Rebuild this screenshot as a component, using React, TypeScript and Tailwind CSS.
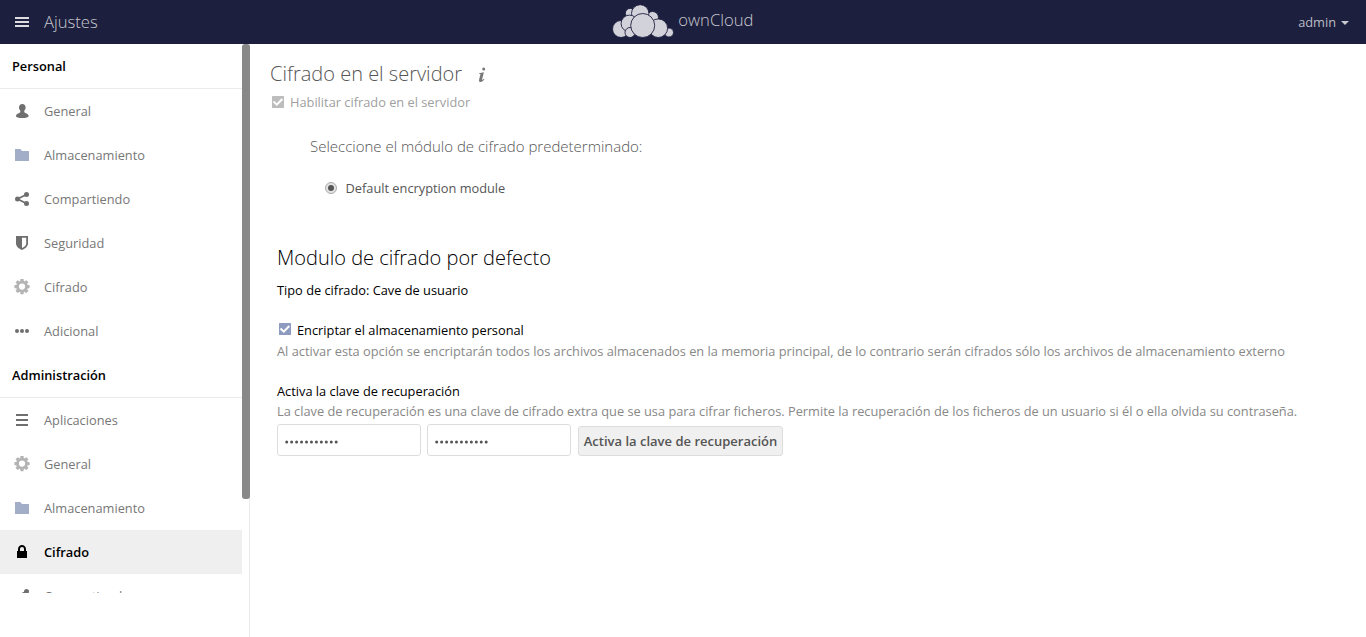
import React from "react";

type IconName = "user" | "folder" | "share" | "shield" | "gear" | "dots" | "list" | "lock";

function Gear() {
  return (
    <g fill="#b4b4b4" transform="translate(0 -0.4)">
      {[0, 45, 90, 135, 180, 225, 270, 315].map((a) => (
        <rect key={a} x="6.3" y="0.4" width="3.4" height="4" rx="0.6" transform={`rotate(${a} 8 8)`} />
      ))}
      <circle cx="8" cy="8" r="4.5" fill="none" stroke="#b4b4b4" strokeWidth="2.8" />
    </g>
  );
}

function Icon({ name }: { name: IconName }) {
  return (
    <svg width="16" height="16" viewBox="0 0 16 16" className="block shrink-0" fill="#6f6f6f">
      {name === "user" && (
        <path d="M8.300 1C6.300 1 5 2.300 5 4.200c0 1.700.6 2.700 1.300 3.500v1.500C5.900 10 2 10.500 2 12.900c0 1.400 2.800 2.100 6.300 2.100s6.300-.7 6.300-2.100C14.600 10.500 10.700 10 10.300 9.200V7.700c.7-.8 1.300-1.800 1.300-3.500C11.600 2.300 10.300 1 8.300 1z" />
      )}
      {name === "folder" && <path fill="#a2adc8" d="M1.300 2h5l1.700 2h6.400a.6.6 0 0 1 .6.600v8.800a.6.6 0 0 1-.6.600H1.600a.6.6 0 0 1-.6-.6V2.300z" />}
      {name === "share" && (
        <g>
          <path d="M12.500 3.500L3.500 8l9 4.500" fill="none" stroke="#6f6f6f" strokeWidth="1.800" />
          <circle cx="12.500" cy="3.500" r="2.500" />
          <circle cx="3.500" cy="8" r="2.500" />
          <circle cx="12.500" cy="12.500" r="2.500" />
        </g>
      )}
      {name === "shield" && (
        <path fillRule="evenodd" d="M2 1h12v7.500c0 3-3 5.200-6 6.500-3-1.300-6-3.500-6-6.500zM8 2.700v10.400c2-.9 4.200-2.500 4.200-4.600V2.700z" />
      )}
      {name === "gear" && <Gear />}
      {name === "dots" && (
        <g>
          <circle cx="3" cy="8" r="2" />
          <circle cx="8" cy="8" r="2" />
          <circle cx="13" cy="8" r="2" />
        </g>
      )}
      {name === "list" && <path d="M2 2h12v2H2zM2 7h12v2H2zM2 12h12v2H2z" />}
      {name === "lock" && (
        <path fill="#000" fillRule="evenodd" d="M8 1C5.800 1 4 2.800 4 5v2H3v7h10V7h-1V5c0-2.200-1.800-4-4-4zm0 2c1.200 0 2 .8 2 2v2H6V5c0-1.200.8-2 2-2z" />
      )}
    </svg>
  );
}

function Item({ icon, label, active }: { icon: IconName; label: string; active?: boolean }) {
  return (
    <li
      className={
        active
          ? "flex h-11 shrink-0 items-center gap-3.5 bg-[#efefef] px-3.5 font-semibold text-black"
          : "flex h-11 shrink-0 items-center gap-3.5 px-3.5 text-[#777777]"
      }
    >
      <Icon name={icon} />
      <span>{label}</span>
    </li>
  );
}

function Section({ title, children }: { title: string; children: React.ReactNode }) {
  return (
    <section>
      <h2 className="flex h-[45px] items-center border-b border-[#ebebeb] px-3 font-semibold text-black">{title}</h2>
      <ul>{children}</ul>
    </section>
  );
}

function Check({ color }: { color: "gray" | "blue" }) {
  return (
    <svg width="12" height="12" viewBox="0 0 12 12" className="block shrink-0">
      <rect width="12" height="12" rx="0.5" fill={color === "gray" ? "#bdbdbd" : "#8c9bbf"} />
      <path d="M1.500 5.500l3.300 3.200 5.500-5.700" fill="none" stroke="#fff" strokeWidth="2" />
    </svg>
  );
}

function Logo() {
  return (
    <svg width="62" height="34" viewBox="612 4 62 34" className="block" fill="#d2d2da" stroke="#1d1f3e" strokeWidth="0.9">
      <circle cx="630.2" cy="13.200" r="4.800" />
      <circle cx="652.500" cy="17.500" r="6" />
      <circle cx="640.200" cy="13.400" r="8.700" />
      <circle cx="621" cy="29" r="8.500" />
      <circle cx="629.500" cy="23.500" r="8.400" />
      <circle cx="630" cy="32.500" r="5" />
      <circle cx="669" cy="32.500" r="4.500" />
      <circle cx="658.300" cy="28.200" r="9.300" />
      <circle cx="642.700" cy="25.500" r="12" />
    </svg>
  );
}

function PasswordBox() {
  return (
    <div className="flex h-8 w-36 items-center rounded-[3px] border border-[#dddddd] bg-white px-[7px]">
      <svg width="54" height="4" viewBox="0 0 54 4" className="mt-[3px]" fill="#555555">
        {Array.from({ length: 11 }, (_, i) => (
          <circle key={i} cx={1.7 + i * 4.95} cy="2" r="1.500" />
        ))}
      </svg>
    </div>
  );
}

export default function App() {
  return (
    <div className="flex h-[637px] w-[1366px] flex-col overflow-hidden bg-white font-['Open_Sans',sans-serif] text-[12.8px] leading-5">
      <header className="grid h-11 shrink-0 grid-cols-3 items-center bg-[#1d1f3e]">
        <div className="flex items-center gap-3.5 pl-3.5">
          <svg width="16" height="16" viewBox="0 0 16 16" fill="#dcdce2" className="block">
            <path d="M1 3h14v2H1zM1 7h14v2H1zM1 11h14v2H1z" />
          </svg>
          <span className="text-[16.64px] font-light text-[#c8c8cf]">Ajustes</span>
        </div>
        <div className="flex items-center gap-[4px] pb-0.5 pl-[157px]">
          <Logo />
          <span className="pb-[3px] text-[16.64px] font-light text-[#c8c8cf]">ownCloud</span>
        </div>
        <div className="flex items-center justify-end gap-[5px] pr-[17px] text-[#bcbcc4]">
          <span>admin</span>
          <svg width="8" height="4" viewBox="0 0 8 4" fill="#c8c8cf" className="mt-px">
            <path d="M0 0h8L4 4z" />
          </svg>
        </div>
      </header>
      <div className="flex min-h-0 flex-1">
        <aside className="flex w-[250px] shrink-0 border-r border-[#ebebeb]">
          <nav className="h-[549px] w-[242px] shrink-0 overflow-hidden">
            <Section title="Personal">
              <Item icon="user" label="General" />
              <Item icon="folder" label="Almacenamiento" />
              <Item icon="share" label="Compartiendo" />
              <Item icon="shield" label="Seguridad" />
              <Item icon="gear" label="Cifrado" />
              <Item icon="dots" label="Adicional" />
            </Section>
            <Section title="Administración">
              <Item icon="list" label="Aplicaciones" />
              <Item icon="gear" label="General" />
              <Item icon="folder" label="Almacenamiento" />
              <Item icon="lock" label="Cifrado" active />
              <Item icon="share" label="Compartiendo" />
            </Section>
          </nav>
          <div className="h-[455px] w-2 shrink-0 rounded-[3px] bg-[#888888]" />
        </aside>
        <main className="flex min-w-0 flex-1 flex-col items-start whitespace-nowrap">
          <div className="mt-[15px] flex h-[30px] items-center gap-[16px] pl-5">
            <h1 className="text-[20px] font-light text-[#555555]">Cifrado en el servidor</h1>
            <svg width="8" height="16" viewBox="0 0 8 16" fill="#777777" className="mt-0.5">
              <circle cx="5.700" cy="1.900" r="1.500" />
              <path d="M1.200 6.200L5.900 5.200 4.100 12.300c-.2.900.5.800 1.900-.5l.4.500C5 14 3.900 15 2.600 15c-1.300 0-1.800-.9-1.500-2.300L2.500 7H1.100z" />
            </svg>
          </div>
          <label className="mt-[3px] flex h-5 items-center gap-1.5 pl-[22px] text-[#a0a0a0]">
            <Check color="gray" />
            <span>Habilitar cifrado en el servidor</span>
          </label>
          <p className="mt-6 pl-[60px] text-[15px] font-light text-[#555555]">Seleccione el módulo de cifrado predeterminado:</p>
          <label className="mt-[22px] flex h-5 items-center gap-[8.5px] pl-[75px] text-[#555555]">
            <svg width="12" height="12" viewBox="0 0 12 12" className="block">
              <circle cx="6" cy="6" r="5.500" fill="#e3e3e3" stroke="#aaaaaa" />
              <circle cx="6" cy="6" r="3" fill="#555555" />
            </svg>
            <span>Default encryption module</span>
          </label>
          <section className="mt-[45px] flex flex-col items-start pl-[27px] text-black">
            <h2 className="h-[30px] text-[20px] leading-[30px] font-light">Modulo de cifrado por defecto</h2>
            <p className="mt-[7px]">Tipo de cifrado: Cave de usuario</p>
            <label className="mt-5 flex h-5 items-center gap-1.5 pl-0.5">
              <span className="-mt-0.5">
                <Check color="blue" />
              </span>
              <span>Encriptar el almacenamiento personal</span>
            </label>
            <p className="mt-px text-[#888888]">
              Al activar esta opción se encriptarán todos los archivos almacenados en la memoria principal, de lo contrario serán cifrados sólo los archivos de almacenamiento externo
            </p>
            <p className="mt-5">Activa la clave de recuperación</p>
            <p className="text-[#888888]">
              La clave de recuperación es una clave de cifrado extra que se usa para cifrar ficheros. Permite la recuperación de los ficheros de un usuario si él o ella olvida su contraseña.
            </p>
            <div className="mt-[3px] flex items-end">
              <PasswordBox />
              <div className="ml-1.5">
                <PasswordBox />
              </div>
              <button className="ml-[7px] flex h-[30px] w-[205px] items-center justify-center rounded-[3px] border border-[#dddddd] bg-[#f0f0f0] text-[13px] font-semibold text-[#555555]">
                Activa la clave de recuperación
              </button>
            </div>
          </section>
        </main>
      </div>
    </div>
  );
}
